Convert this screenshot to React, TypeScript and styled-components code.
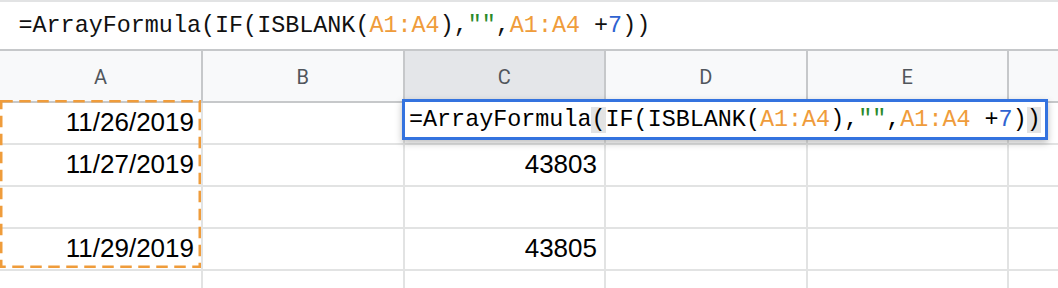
import React from "react";
import styled, { createGlobalStyle } from "styled-components";

const Global = createGlobalStyle`
  html, body { margin: 0; padding: 0; background: #ffffff; }
  body { width: 1058px; height: 288px; overflow: hidden; }
`;

const MONO = `"Liberation Mono", "DejaVu Sans Mono", monospace`;
const MONO_SIZE = "23.4px";
const ORANGE = "#ef9c3b";
const BLUE_NUM = "#2f63d1";
const GREEN = "#2b8a2b";

const Page = styled.div`
  display: flex;
  flex-direction: column;
  width: 1058px;
`;

const FormulaBar = styled.div`
  height: 47px;
  border-top: 2px solid #e2e3e4;
  border-bottom: 2px solid #c6c8ca;
  display: flex;
  align-items: center;
  padding-left: 18.5px;
  box-sizing: content-box;
  font-family: ${MONO};
  font-size: ${MONO_SIZE};
  color: #111;
  white-space: pre;
`;

const Tok = styled.span<{ $c?: string; $hl?: boolean }>`
  color: ${(p) => p.$c || "inherit"};
  background: ${(p) => (p.$hl ? "#e3e3e3" : "transparent")};
`;

const Sheet = styled.div`
  position: relative;
  display: grid;
  grid-template-columns: 203px 201.5px 201.5px 201.5px 201.5px 1fr;
  grid-auto-rows: auto;
`;

const HeadCell = styled.div<{ $sel?: boolean; $last?: boolean }>`
  height: 48px;
  background: ${(p) => (p.$sel ? "#e4e6e9" : "#f8f9fa")};
  border-bottom: 2px solid #c6c8ca;
  border-right: ${(p) => (p.$last ? "none" : "2px solid #c6c8ca")};
  display: flex;
  align-items: center;
  justify-content: center;
  font-family: Roboto, "Liberation Sans", sans-serif;
  font-size: 20px;
  color: #51565c;
  padding-top: 2px;
  box-sizing: content-box;
`;

const Cell = styled.div<{ $last?: boolean; $short?: boolean }>`
  height: ${(p) => (p.$short ? "30px" : "42px")};
  border-bottom: 2px solid #e2e3e3;
  border-right: ${(p) => (p.$last ? "none" : "2px solid #e2e3e3")};
  font-family: "Liberation Sans", Arial, sans-serif;
  font-size: 26px;
  line-height: 38px;
  padding-right: 7px;
  text-align: right;
  color: #000;
  box-sizing: border-box;
`;

const RangeBox = styled.svg`
  position: absolute;
  left: 0;
  top: 49px;
  width: 202px;
  height: 168px;
  pointer-events: none;
`;

const Editor = styled.div`
  position: absolute;
  left: 402px;
  top: 48px;
  width: 646px;
  height: 41px;
  box-sizing: border-box;
  border: 3px solid #3473df;
  background: #ffffff;
  box-shadow: 0 3px 7px rgba(0, 0, 0, 0.26);
  display: flex;
  align-items: center;
  padding-left: 4px;
  font-family: ${MONO};
  font-size: ${MONO_SIZE};
  color: #000;
  white-space: pre;
  overflow: hidden;
`;

const Formula: React.FC<{ hl?: boolean }> = ({ hl }) => (
  <>
    <Tok>=ArrayFormula</Tok>
    <Tok $hl={hl}>(</Tok>
    <Tok>IF(ISBLANK(</Tok>
    <Tok $c={ORANGE}>A1:A4</Tok>
    <Tok>),</Tok>
    <Tok $c={GREEN}>""</Tok>
    <Tok>,</Tok>
    <Tok $c={ORANGE}>A1:A4 </Tok>
    <Tok>+</Tok>
    <Tok $c={BLUE_NUM}>7</Tok>
    <Tok>)</Tok>
    <Tok $hl={hl}>)</Tok>
  </>
);

const headers = ["A", "B", "C", "D", "E", ""];
const rows: string[][] = [
  ["11/26/2019", "", "", "", "", ""],
  ["11/27/2019", "", "43803", "", "", ""],
  ["", "", "", "", "", ""],
  ["11/29/2019", "", "43805", "", "", ""],
  ["", "", "", "", "", ""],
];

export default function App() {
  return (
    <Page>
      <Global />
      <FormulaBar>
        <Formula />
      </FormulaBar>
      <Sheet>
        {headers.map((h, i) => (
          <HeadCell key={"h" + i} $sel={i === 2} $last={i === 5}>
            {h}
          </HeadCell>
        ))}
        {rows.map((r, ri) =>
          r.map((v, ci) => (
            <Cell key={ri + "-" + ci} $last={ci === 5} $short={ri === 4}>
              {v}
            </Cell>
          ))
        )}
        <RangeBox viewBox="0 0 202 168">
          <rect
            x="1.25"
            y="1.25"
            width="198.5"
            height="165.5"
            fill="none"
            stroke={ORANGE}
            strokeWidth="2.5"
            strokeDasharray="11.5 6.5"
          />
        </RangeBox>
        <Editor>
          <Formula hl />
        </Editor>
      </Sheet>
    </Page>
  );
}
